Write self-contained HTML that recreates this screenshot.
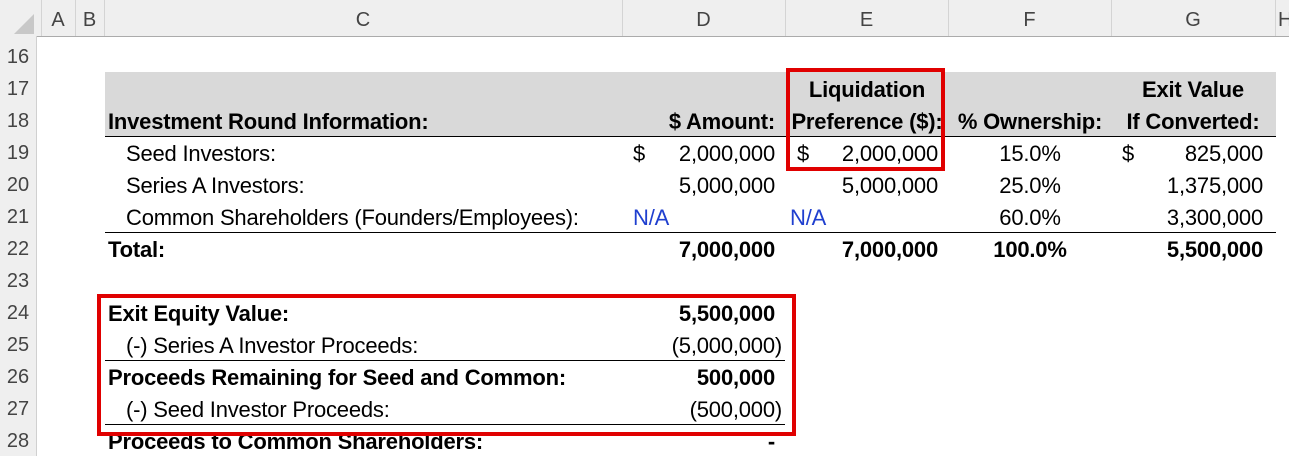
<!DOCTYPE html>
<html><head><meta charset="utf-8"><style>
html,body{margin:0;padding:0;width:1289px;height:456px;overflow:hidden;background:#fff;font-family:"Liberation Sans",sans-serif;}
.a{position:absolute;white-space:nowrap;line-height:34px;font-size:22px;color:#000;letter-spacing:-0.2px}
.b{font-weight:bold}
.r{text-align:right}
.c{text-align:center}
.hd{position:absolute;top:0;height:36px;line-height:40px;font-size:20px;color:#444;text-align:center}
.rn{position:absolute;left:0;width:36px;text-align:center;font-size:20px;color:#444;line-height:33px}
.vl{position:absolute;top:0;height:36px;width:1px;background:#d4d4d4}
.hl{position:absolute;height:1px;background:#000}
.blue{color:#1f3fcf}
</style></head><body>
<div style="position:absolute;left:0;top:0;width:1289px;height:36px;background:#efefef;border-bottom:1px solid #ababab"></div>
<div style="position:absolute;left:0;top:36px;width:36px;height:420px;background:#efefef;border-right:1px solid #d0d0d0"></div>
<svg style="position:absolute;left:14px;top:14px" width="20" height="20"><polygon points="20,0 20,20 0,20" fill="#c8c8c8"/></svg>
<div class="vl" style="left:41px"></div><div class="vl" style="left:75px"></div><div class="vl" style="left:104px"></div>
<div class="vl" style="left:622px"></div><div class="vl" style="left:785px"></div><div class="vl" style="left:948px"></div>
<div class="vl" style="left:1111px"></div><div class="vl" style="left:1275px"></div>
<div class="hd" style="left:41px;width:34px">A</div>
<div class="hd" style="left:75px;width:29px">B</div>
<div class="hd" style="left:104px;width:518px">C</div>
<div class="hd" style="left:622px;width:163px">D</div>
<div class="hd" style="left:785px;width:163px">E</div>
<div class="hd" style="left:948px;width:163px">F</div>
<div class="hd" style="left:1111px;width:164px">G</div>
<div class="hd" style="left:1278px;width:20px;text-align:left">H</div>

<div class="rn" style="top:41px">16</div><div class="rn" style="top:73px">17</div><div class="rn" style="top:105px">18</div>
<div class="rn" style="top:137px">19</div><div class="rn" style="top:169px">20</div><div class="rn" style="top:201px">21</div>
<div class="rn" style="top:233px">22</div><div class="rn" style="top:265px">23</div><div class="rn" style="top:297px">24</div>
<div class="rn" style="top:329px">25</div><div class="rn" style="top:361px">26</div><div class="rn" style="top:393px">27</div>
<div class="rn" style="top:425px">28</div>

<div style="position:absolute;left:105px;top:72px;width:1171px;height:65px;background:#d9d9d9"></div>
<div class="hl" style="left:105px;top:136px;width:1171px"></div>
<div class="hl" style="left:105px;top:232px;width:1171px"></div>
<div class="hl" style="left:105px;top:360px;width:680px"></div>
<div class="hl" style="left:105px;top:424px;width:680px"></div>

<div class="a b" style="left:108px;top:105px">Investment Round Information:</div>
<div class="a b r" style="right:514px;top:105px">$ Amount:</div>
<div class="a b c" style="left:767px;width:200px;top:73px">Liquidation</div>
<div class="a b c" style="left:767px;width:200px;top:105px">Preference ($):</div>
<div class="a b c" style="left:930px;width:200px;top:105px">% Ownership:</div>
<div class="a b c" style="left:1093px;width:200px;top:73px">Exit Value</div>
<div class="a b c" style="left:1093px;width:200px;top:105px">If Converted:</div>

<div class="a" style="left:126px;top:137px">Seed Investors:</div>
<div class="a" style="left:633px;top:137px">$</div><div class="a r" style="right:514px;top:137px">2,000,000</div>
<div class="a" style="left:797px;top:137px">$</div><div class="a r" style="right:351px;top:137px">2,000,000</div>
<div class="a c" style="left:930px;width:200px;top:137px">15.0%</div>
<div class="a" style="left:1122px;top:137px">$</div><div class="a r" style="right:26px;top:137px">825,000</div>

<div class="a" style="left:126px;top:169px">Series A Investors:</div>
<div class="a r" style="right:514px;top:169px">5,000,000</div>
<div class="a r" style="right:351px;top:169px">5,000,000</div>
<div class="a c" style="left:930px;width:200px;top:169px">25.0%</div>
<div class="a r" style="right:26px;top:169px">1,375,000</div>

<div class="a" style="left:126px;top:201px">Common Shareholders (Founders/Employees):</div>
<div class="a blue" style="left:633px;top:201px">N/A</div>
<div class="a blue" style="left:790px;top:201px">N/A</div>
<div class="a c" style="left:930px;width:200px;top:201px">60.0%</div>
<div class="a r" style="right:26px;top:201px">3,300,000</div>

<div class="a b" style="left:108px;top:233px">Total:</div>
<div class="a b r" style="right:514px;top:233px">7,000,000</div>
<div class="a b r" style="right:351px;top:233px">7,000,000</div>
<div class="a b c" style="left:930px;width:200px;top:233px">100.0%</div>
<div class="a b r" style="right:26px;top:233px">5,500,000</div>

<div class="a b" style="left:108px;top:297px">Exit Equity Value:</div>
<div class="a b r" style="right:514px;top:297px">5,500,000</div>
<div class="a" style="left:126px;top:329px">(-) Series A Investor Proceeds:</div>
<div class="a r" style="right:507px;top:329px">(5,000,000)</div>
<div class="a b" style="left:108px;top:361px">Proceeds Remaining for Seed and Common:</div>
<div class="a b r" style="right:514px;top:361px">500,000</div>
<div class="a" style="left:126px;top:393px">(-) Seed Investor Proceeds:</div>
<div class="a r" style="right:507px;top:393px">(500,000)</div>
<div class="a b" style="left:108px;top:425px">Proceeds to Common Shareholders:</div>
<div class="a b r" style="right:514px;top:425px">-</div>

<div style="position:absolute;left:786px;top:68px;width:151px;height:95px;border:4px solid #e00000"></div>
<div style="position:absolute;left:97px;top:294px;width:691px;height:134px;border:4px solid #e00000"></div>
</body></html>
